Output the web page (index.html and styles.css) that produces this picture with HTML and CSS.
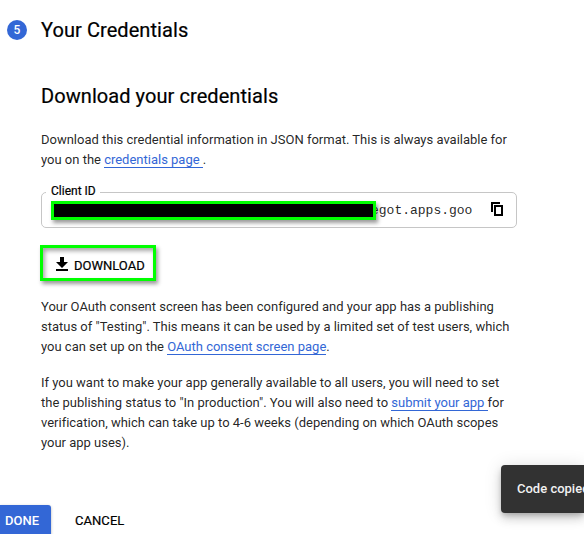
FILE: index.html
```html
<!DOCTYPE html>
<html lang="en">
<head>
<meta charset="utf-8">
<title>Your Credentials</title>
<link rel="stylesheet" href="styles.css">
</head>
<body>
<main class="page">
  <header class="step">
    <span class="step-number">5</span>
    <h1 class="title">Your Credentials</h1>
  </header>
  <section class="content">
    <h2 class="title">Download your credentials</h2>
    <p class="text intro">Download this credential information in JSON format. This is always available for<br>you on the <a class="link" href="#">credentials page </a>.</p>
    <fieldset class="field">
      <legend class="field-label">Client ID</legend>
      <div class="field-row">
        <span class="redaction"></span>
        <span class="client-id">egot.apps.goo</span>
        <svg class="copy" width="12" height="14" viewBox="0 0 12 14"><path d="M0 0h9v2H2v8H0zM3 3h9v11H3zM5 5v7h5V5z" fill-rule="evenodd"/></svg>
      </div>
    </fieldset>
    <button class="download"><svg width="12" height="14" viewBox="0 0 12 14"><path d="M4 0h4v5h4L6 11 0 5h4zM0 12h12v2H0z"/></svg><span>DOWNLOAD</span></button>
    <p class="text status">Your OAuth consent screen has been configured and your app has a publishing<br>status of "Testing". This means it can be used by a limited set of test users, which<br>you can set up on the <a class="link" href="#">OAuth consent screen page</a>.</p>
    <p class="text">If you want to make your app generally available to all users, you will need to set<br>the publishing status to "In production". You will also need to <a class="link" href="#">submit your app </a>for<br>verification, which can take up to 4-6 weeks (depending on which OAuth scopes<br>your app uses).</p>
  </section>
  <footer class="actions">
    <button class="done">DONE</button>
    <button class="cancel">CANCEL</button>
  </footer>
</main>
<div class="toast">Code copied</div>
</body>
</html>
```
FILE: styles.css
```css
* { box-sizing: border-box; }
body {
  margin: 0;
  height: 534px;
  overflow: hidden;
  background: #fff;
  color: #000;
  font-family: Roboto, "Liberation Sans", sans-serif;
  font-size: 13px;
}
.page { height: 534px; overflow: hidden; }
.step {
  display: flex;
  align-items: center;
  gap: 14px;
  height: 60px;
  padding-left: 7px;
}
.step-number {
  width: 20px;
  height: 20px;
  border-radius: 50%;
  background: #3367d6;
  color: #fff;
  font-size: 12px;
  font-weight: 500;
  line-height: 20px;
  text-align: center;
}
.title {
  margin: 0;
  font-size: 20px;
  font-weight: 400;
  line-height: 28px;
  letter-spacing: 0.07px;
  -webkit-text-stroke: 0.2px #000;
}
.content { width: 476px; margin: 22px 0 0 41px; }
.text {
  margin: 0;
  color: rgba(0, 0, 0, 0.87);
  line-height: 20px;
  letter-spacing: -0.005px;
  white-space: nowrap;
}
.intro { margin-top: 20px; }
.link {
  color: #3367d6;
  text-decoration: none;
  border-bottom: 1px solid #3367d6;
}
.field {
  height: 44px;
  margin: 14px 0 0;
  padding: 0 13px 0 9px;
  border: 1px solid #c6c6c6;
  border-radius: 5px;
}
.field-label {
  height: 16px;
  margin-left: -5px;
  padding: 0 4px 0 5px;
  font-size: 12px;
  line-height: 14px;
  -webkit-text-stroke: 0.2px #000;
}
.field-row { display: flex; align-items: flex-start; height: 27px; }
.redaction {
  position: relative;
  z-index: 1;
  flex: none;
  width: 325px;
  height: 19px;
  margin-top: 1px;
  border: 3px solid #0f0;
  background: #000;
  box-shadow: 2px 3px 4px rgba(0, 0, 0, 0.4);
}
.client-id {
  margin: 1px 0 0 -5px;
  color: rgba(0, 0, 0, 0.87);
  font-family: "Liberation Mono", monospace;
  font-size: 13px;
  line-height: 20px;
}
.copy { flex: none; margin: 2px 0 0 auto; }
button { border: 0; font: 500 13px Roboto, sans-serif; }
.download {
  display: flex;
  align-items: center;
  gap: 6px;
  width: 116px;
  height: 36px;
  margin: 17px 0 16px -1px;
  padding: 4px 0 0 13px;
  border: 3px solid #0f0;
  background: #fff;
  color: #000;
  font-weight: 400;
  -webkit-text-stroke: 0.2px #000;
  box-shadow: 2px 3px 4px rgba(0, 0, 0, 0.4), inset 2px 3px 4px rgba(0, 0, 0, 0.35);
}
.download svg { margin-top: -2px; }
.status { margin-bottom: 16px; }
.actions { display: flex; gap: 24px; margin-top: 52px; height: 36px; }
.done {
  width: 51px;
  height: 32px;
  padding: 0 0 2px 5px;
  border-radius: 0 3px 0 0;
  background: #3367d6;
  color: #fff;
  text-align: left;
  box-shadow: 0 1px 3px rgba(0, 0, 0, 0.3);
}
.cancel {
  height: 32px;
  padding: 0 0 2px;
  background: none;
  color: #000;
  font-weight: 400;
  letter-spacing: 0.05px;
  -webkit-text-stroke: 0.2px #000;
}
.toast {
  position: absolute;
  left: 501px;
  top: 465px;
  width: 83px;
  height: 48px;
  padding-left: 16px;
  overflow: hidden;
  border-radius: 4px 0 0 4px;
  background: #323232;
  color: #f1f1f1;
  font-weight: 500;
  line-height: 48px;
  white-space: nowrap;
  box-shadow: 0 3px 5px -1px rgba(0, 0, 0, 0.2), 0 6px 10px rgba(0, 0, 0, 0.14), 0 1px 18px rgba(0, 0, 0, 0.12);
}
```
